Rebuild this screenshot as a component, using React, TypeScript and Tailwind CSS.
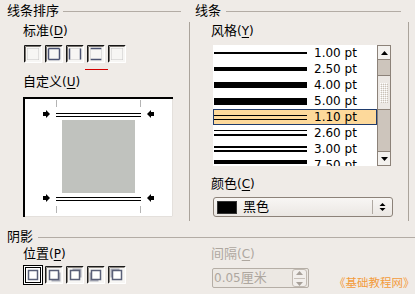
function cx(...a: (string | false | undefined)[]) {
  return a.filter(Boolean).join(' ')
}

function Label({ text, k, className }: { text: string; k: string; className?: string }) {
  return (
    <div className={cx('h-[16px] flex items-center whitespace-nowrap', className)}>
      <span className="text-[13px]">{text}</span>
      <span>(</span>
      <span className="underline underline-offset-2">{k}</span>
      <span>)</span>
    </div>
  )
}

// solid: which sides of the inner square are drawn solid (t, r, b, l)
function BorderIcon({ solid }: { solid: string }) {
  const side = (s: string, d: string) =>
    solid.includes(s) ? (
      <path d={d} stroke="#4b5270" strokeWidth="1.5" fill="none" />
    ) : (
      <path d={d} stroke="#c6c6c6" strokeWidth="1" strokeDasharray="1 1" fill="none" />
    )
  return (
    <svg width="18" height="18" viewBox="0 0 18 18">
      <rect x="0" y="0" width="18" height="18" fill="#f7f6f4" />
      <path d="M0.5 17.5V0.5H17.5" stroke="#151515" fill="none" />
      <path d="M1.5 16.5V1.5H16.5" stroke="#77726d" fill="none" />
      <path d="M0.5 17.5H17.5V0.5" stroke="#ffffff" fill="none" />
      {side('t', 'M3.5 3.5H14.5')}
      {side('b', 'M3.5 14.5H14.5')}
      {side('l', 'M3.5 3.5V14.5')}
      {side('r', 'M14.5 3.5V14.5')}
    </svg>
  )
}

function ShadowIcon({ shadow, selected }: { shadow?: string; selected?: boolean }) {
  const off: Record<string, [number, number]> = {
    br: [2, 2],
    tr: [2, -2],
    bl: [-2, 2],
    tl: [-2, -2],
  }
  const o = shadow ? off[shadow] : null
  return (
    <svg width="20" height="20" viewBox="0 0 20 20">
      {selected ? (
        <>
          <rect x="0.5" y="0.5" width="19" height="19" fill="#ffffff" stroke="#000" />
          <rect x="2.5" y="2.5" width="15" height="15" fill="#ffffff" stroke="#000" />
        </>
      ) : (
        <>
          <rect x="1" y="1" width="18" height="18" fill="#f7f6f4" />
          <path d="M1.5 18.5V1.5H18.5" stroke="#1c1c1c" fill="none" />
          <path d="M2.5 17.5V2.5H17.5" stroke="#8b8680" fill="none" />
          <path d="M1.5 18.5H18.5V1.5" stroke="#ffffff" fill="none" />
        </>
      )}
      {o && <rect x={5.5 + o[0]} y={5.5 + o[1]} width="9" height="9" fill="#abadb8" />}
      <rect x="5.5" y="5.5" width="9" height="9" fill="#ffffff" stroke="#5a6078" strokeWidth="1.5" />
    </svg>
  )
}

const styles = [
  { label: '1.00 pt', lines: [2], gap: 0 },
  { label: '2.50 pt', lines: [4], gap: 0 },
  { label: '4.00 pt', lines: [6], gap: 0 },
  { label: '5.00 pt', lines: [7], gap: 0 },
  { label: '1.10 pt', lines: [1, 1], gap: 3, selected: true },
  { label: '2.60 pt', lines: [1, 2], gap: 3 },
  { label: '3.00 pt', lines: [2, 2], gap: 2 },
  { label: '7.50 pt', lines: [4, 4], gap: 2 },
]

function Preview() {
  const rightArrow = (y: number) =>
    `20,${y - 2} 23,${y - 2} 23,${y - 4} 27,${y} 23,${y + 4} 23,${y + 2} 20,${y + 2}`
  const leftArrow = (y: number) =>
    `131,${y - 2} 128,${y - 2} 128,${y - 4} 124,${y} 128,${y + 4} 128,${y + 2} 131,${y + 2}`
  return (
    <svg width="150" height="120" viewBox="0 0 150 120" className="block">
      <rect x="0" y="0" width="150" height="120" fill="#ffffff" />
      <path d="M1 120V1H150" stroke="#000" strokeWidth="2" fill="none" />
      <path d="M149.5 2V119.5H2" stroke="#e4e0dc" fill="none" />
      <g stroke="#b4b4b4">
        <path d="M33.5 3V10M117.5 3V10M33.5 109V116M117.5 109V116" />
      </g>
      <g stroke="#000">
        <path d="M33 16.5H118M33 19.5H118M33 100.5H118M33 103.5H118" />
      </g>
      <polygon points={rightArrow(17)} fill="#000" />
      <polygon points={leftArrow(17)} fill="#000" />
      <polygon points={rightArrow(101)} fill="#000" />
      <polygon points={leftArrow(101)} fill="#000" />
      <rect x="39" y="23" width="73" height="73" fill="#c0c2be" />
    </svg>
  )
}

function Scrollbar() {
  return (
    <div className="w-[14px] h-full border border-[#8c8279] flex flex-col bg-[#cdc5bc]">
      <div className="h-[14px] bg-[#f3f1ee] border-b border-[#8c8279] flex items-center justify-center">
        <svg width="7" height="4" viewBox="0 0 7 4">
          <polygon points="0,4 3.5,0 7,4" fill="#000" />
        </svg>
      </div>
      <div className="h-[15px]" />
      <div className="h-[35px] bg-[#ece8e4] border-y border-[#8c8279] flex items-center justify-center">
        <svg width="8" height="20" viewBox="0 0 8 20">
          <defs>
            <pattern id="grip" width="2" height="2" patternUnits="userSpaceOnUse">
              <rect x="0" y="0" width="1" height="1" fill="#ffffff" />
              <rect x="1" y="1" width="1" height="1" fill="#c9c2b9" />
            </pattern>
          </defs>
          <rect x="0" y="0" width="8" height="20" fill="url(#grip)" />
        </svg>
      </div>
      <div className="flex-1" />
      <div className="h-[14px] bg-[#f3f1ee] border-t border-[#8c8279] flex items-center justify-center">
        <svg width="7" height="4" viewBox="0 0 7 4">
          <polygon points="0,0 3.5,4 7,0" fill="#000" />
        </svg>
      </div>
    </div>
  )
}

export default function App() {
  return (
    <div className="relative w-[415px] h-[294px] overflow-hidden bg-[#efebe7] text-black text-[12px] leading-[16px] font-['DejaVu_Sans','Noto_Sans_CJK_SC',sans-serif]">
      {/* Top: line arrangement + line */}
      <div className="flex h-[221px]">
        <div className="w-[190px] flex flex-col">
          <div className="mt-[3px] h-[16px] flex items-center pl-[7px]">
            <span className="text-[13px]">线条排序</span>
            <div className="flex-1 ml-[4px] mr-[9px] h-px bg-[#b3aca5]" />
          </div>
          <div className="mt-[3px] flex-1 border-r border-[#aaa39b] pl-[23px] pt-[1px]">
            <Label text="标准" k="D" />
            <div className="mt-[6px] ml-[1px] flex gap-[3px]">
              <BorderIcon solid="" />
              <BorderIcon solid="tlbr" />
              <BorderIcon solid="lr" />
              <BorderIcon solid="tb" />
              <BorderIcon solid="" />
            </div>
            <div className="mt-[6px] ml-[62px] w-[23px] h-px bg-[#d40000]" />
            <Label text="自定义" k="U" className="mt-[4px]" />
            <div className="mt-[7px]">
              <Preview />
            </div>
          </div>
        </div>

        <div className="flex-1 flex flex-col">
          <div className="mt-[3px] h-[16px] flex items-center pl-[5px]">
            <span className="text-[13px]">线条</span>
            <div className="flex-1 ml-[5px] mr-[14px] h-px bg-[#b3aca5]" />
          </div>
          <div className="mt-[3px] mr-[6px] flex-1 border-r border-[#aaa39b] pl-[21px] pt-[1px]">
            <Label text="风格" k="Y" />
            <div className="mt-[6px] ml-[2px] w-[178px] h-[121px] flex">
              <div className="flex-1 bg-white overflow-hidden">
                {styles.map((s) => (
                  <div
                    key={s.label}
                    className={cx(
                      'h-[16px] flex items-center',
                      s.selected && 'bg-[#fdd99b] shadow-[inset_0_0_0_1px_#1f3b6c]'
                    )}
                  >
                    <div className="ml-[1px] w-[93px] flex flex-col" style={{ gap: s.gap }}>
                      {s.lines.map((h, i) => (
                        <div key={i} className="bg-black" style={{ height: h }} />
                      ))}
                    </div>
                    <span className="ml-[7px] whitespace-nowrap">{s.label}</span>
                  </div>
                ))}
              </div>
              <Scrollbar />
            </div>
            <Label text="颜色" k="C" className="mt-[10px]" />
            <div className="mt-[5px] ml-[2px] w-[180px] h-[20px] rounded-[3px] border border-[#8c8279] bg-gradient-to-b from-[#f8f6f4] to-[#ebe7e3] flex items-center">
              <div className="ml-[3px] w-[20px] h-[13px] bg-black border border-[#333]" />
              <span className="ml-[6px] text-[13px]">黑色</span>
              <div className="ml-auto h-[14px] w-px bg-[#b0a9a2]" />
              <svg width="7" height="10" viewBox="0 0 7 10" className="mx-[6px]">
                <polygon points="0.5,4 3.5,1 6.5,4" fill="#000" />
                <polygon points="0.5,6 3.5,9 6.5,6" fill="#000" />
              </svg>
            </div>
          </div>
        </div>
      </div>

      {/* Bottom: shadow */}
      <div className="mt-[8px] h-[16px] flex items-center pl-[7px]">
        <span className="text-[13px]">阴影</span>
        <div className="flex-1 ml-[5px] h-px bg-[#b3aca5]" />
      </div>
      <div className="flex pl-[23px]">
        <div className="w-[188px]">
          <Label text="位置" k="P" className="mt-[1px]" />
          <div className="mt-[3px] flex">
            <div className="w-[21px]"><ShadowIcon selected /></div>
            <div className="w-[21px]"><ShadowIcon shadow="br" /></div>
            <div className="w-[21px]"><ShadowIcon shadow="tr" /></div>
            <div className="w-[21px]"><ShadowIcon shadow="bl" /></div>
            <div className="w-[21px]"><ShadowIcon shadow="tl" /></div>
          </div>
        </div>
        <div className="text-[#aea79f]">
          <Label text="间隔" k="C" className="mt-[1px]" />
          <div className="mt-[6px] ml-[1px] w-[97px] h-[20px] rounded-[2px] border border-[#b5aea6] bg-[#ece8e3] flex items-center">
            <span className="ml-[1px] whitespace-nowrap">
              0.05<span className="text-[13px]">厘米</span>
            </span>
            <div className="ml-auto mr-px w-[15px] h-[18px] rounded-[3px] border border-[#c2bbb3] bg-[#f2efec] flex flex-col items-center justify-center gap-[3px]">
              <svg width="7" height="4" viewBox="0 0 7 4">
                <polygon points="0,4 3.5,0 7,4" fill="#a8a19a" />
              </svg>
              <div className="w-[11px] h-px bg-[#c8c1ba]" />
              <svg width="7" height="4" viewBox="0 0 7 4">
                <polygon points="0,0 3.5,4 7,0" fill="#a8a19a" />
              </svg>
            </div>
          </div>
        </div>
      </div>

      {/* watermark */}
      <div className="absolute left-[334px] top-[275px] text-[11.5px] leading-[14px] text-[#f39b3c] whitespace-nowrap font-['Noto_Sans_CJK_SC',sans-serif]">
        《基础教程网》
      </div>
    </div>
  )
}
